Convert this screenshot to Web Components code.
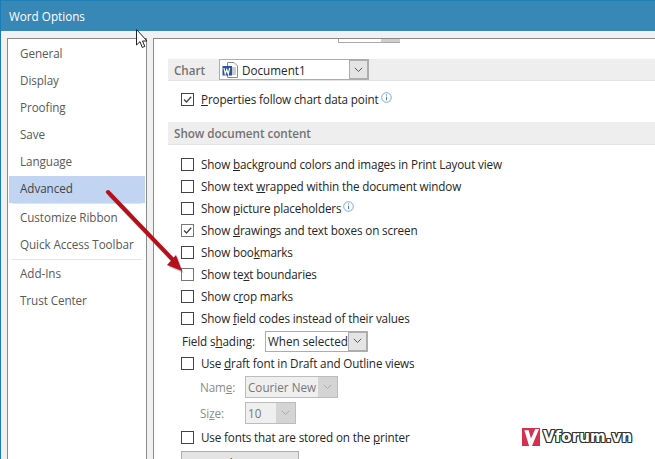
<!DOCTYPE html>
<html lang="en"><head><meta charset="utf-8"><title>Word Options</title>
<style>
html,body{margin:0;padding:0;height:459px;overflow:hidden;background:#f1f1f1}
body{font:11.7px "Open Sans","Noto Sans",sans-serif;color:#262626}
word-options{height:459px}
</style></head><body>
<word-options>
  <nav-panel slot="nav">
    <nav-item>General</nav-item><nav-item>Display</nav-item><nav-item>Proofing</nav-item><nav-item>Save</nav-item><nav-item>Language</nav-item>
    <nav-item selected>Advanced</nav-item>
    <nav-sep></nav-sep>
    <nav-item>Customize Ribbon</nav-item><nav-item>Quick Access Toolbar</nav-item>
    <nav-sep></nav-sep>
    <nav-item>Add-Ins</nav-item><nav-item>Trust Center</nav-item>
  </nav-panel>
  <options-pane slot="content">
    <section-head style="height:22px;margin-top:20px">
      <span style="width:45px">Chart</span>
      <opt-combo w="150" h="21" doc>Document1</opt-combo>
    </section-head>
    <opt-check checked style="margin-top:7px"><u>P</u>roperties follow chart data point<info-icon></info-icon></opt-check>
    <section-head style="height:23px;margin-top:12px;margin-bottom:8px"><span>Show document content</span></section-head>
    <opt-check>Show <u>b</u>ackground colors and images in Print Layout view</opt-check>
    <opt-check>Show text <u>w</u>rapped within the document window</opt-check>
    <opt-check>Show <u>p</u>icture placeholders<info-icon></info-icon></opt-check>
    <opt-check checked soft>Show <u>d</u>rawings and text boxes on screen</opt-check>
    <opt-check>Show boo<u>k</u>marks</opt-check>
    <opt-check soft>Show te<u>x</u>t boundaries</opt-check>
    <opt-check>Show c<u>r</u>op marks</opt-check>
    <opt-check>Show <u>f</u>ield codes instead of their values</opt-check>
    <opt-field label="Field s|h|ading:" w="83" pad="14" style="height:24px"><opt-combo w="103" h="21">When selected</opt-combo></opt-field>
    <opt-check style="height:20px">Use <u>d</u>raft font in Draft and Outline views</opt-check>
    <opt-field label="Nam|e|:" disabled w="45" pad="32" style="height:26px;margin-top:1px"><opt-combo w="93" h="22" disabled>Courier New</opt-combo></opt-field>
    <opt-field label="Si|z|e:" disabled w="45" pad="32" style="height:25px"><opt-combo w="51" h="22" disabled>10</opt-combo></opt-field>
    <opt-check style="margin-top:1px">Use fonts that are stored on the <u>p</u>rinter</opt-check>
    <opt-button style="margin-top:3px">Font Substitution...</opt-button>
  </options-pane>
  <hover-cursor slot="overlay"></hover-cursor>
  <red-arrow slot="overlay"></red-arrow>
  <vforum-mark slot="overlay"></vforum-mark>
</word-options>
<script>
const def=(name,html)=>customElements.define(name,class extends HTMLElement{
  connectedCallback(){ if(this.shadowRoot) return; const r=this.attachShadow({mode:'open'}); r.innerHTML=typeof html==='function'?html(this):html; }
});
const F='"Open Sans","Noto Sans",sans-serif';
def('word-options',`<style>
:host{display:flex;flex-direction:column;position:relative;overflow:hidden;background:#f1f1f1;border-left:1px solid #1b7db5}
.title{height:31px;flex:none;box-sizing:border-box;border-top:1px solid #1e80b6;background:#3787b7;color:#fff;font:11.7px ${F};display:flex;align-items:center;padding-left:8px}
.main{flex:1;display:flex;gap:6px;padding:7px 0 0 6px;min-height:0}
</style><div class="title">Word Options</div><div class="main"><slot name="nav"></slot><slot name="content"></slot></div><slot name="overlay"></slot>`);
def('nav-panel',`<style>
:host{display:flex;flex-direction:column;box-sizing:border-box;width:140px;flex:none;background:#fff;border:1px solid #8a8a8a;border-bottom:0;padding:2px 1px 0 1px}
</style><slot></slot>`);
def('nav-item',`<style>
:host{display:block;height:27px;padding-left:11px;font:11.7px/25px ${F};color:#595959;letter-spacing:-.08px}
:host([selected]){background:#c1d4f1;color:#444}
</style><slot></slot>`);
def('nav-sep',`<style>:host{display:block;height:2px;margin:0 3px;border-top:1px solid #e4e4e4;box-sizing:border-box}</style>`);
def('options-pane',`<style>
:host{display:flex;flex-direction:column;flex:1;min-width:0;box-sizing:border-box;background:#fff;border-top:1px solid #8a8a8a;border-left:1px solid #8a8a8a;padding-left:14px;position:relative;overflow:hidden}
.scrap{position:absolute;left:184px;top:0;width:62px;height:4px;box-sizing:border-box;border:1px solid #a9a9a9;border-top:0}
.scrap i{position:absolute;right:-1px;top:0;width:19px;height:3px;background:#cfcfcf}
</style><div class="scrap"><i></i></div><slot></slot>`);
def('section-head',`<style>
:host{display:flex;align-items:center;flex:none;background:#eeeeee;border-bottom:1px solid #e2e2e2;box-sizing:border-box;padding-left:6px;color:#737373;font:600 11.7px ${F};letter-spacing:-.05px}
::slotted(span){display:block;flex:none}
</style><slot></slot>`);
def('opt-check',h=>`<style>
:host{display:flex;align-items:center;height:22px;flex:none;padding-left:13px;font:11.7px ${F};color:#262626;letter-spacing:-.15px}
.box{width:13px;height:13px;flex:none;box-sizing:border-box;border:1px solid #444;background:#fff;margin-right:7px;display:block}
:host([soft]) .box{border-color:#777}
svg{display:block}
</style><span class="box">${h.hasAttribute('checked')?'<svg width="11" height="11" viewBox="0 0 11 11"><path d="M2 5.500l2.500 2.500L9.200 2.800" fill="none" stroke="#444" stroke-width="1.300"/></svg>':''}</span><span><slot></slot></span>`);
def('info-icon',`<style>:host{display:inline-block;width:11px;height:11px;margin-left:2px;vertical-align:1px}svg{display:block}</style><svg width="11" height="11" viewBox="0 0 11 11"><circle cx="5.500" cy="5.500" r="4.800" fill="none" stroke="#7aa7e0"/><path d="M5.500 2.500v1M5.500 4.700v3.500" stroke="#3f7fd0" fill="none"/></svg>`);
def('opt-field',h=>{const [a,b,c]=h.getAttribute('label').split('|');return `<style>
:host{display:flex;align-items:center;flex:none;font:11.7px ${F};color:#262626;letter-spacing:-.12px;padding-left:${h.getAttribute('pad')}px}
:host([disabled]){color:#8c8c8c}
.l{width:${h.getAttribute('w')}px;flex:none}
</style><span class="l">${a}<u>${b}</u>${c}</span><slot></slot>`});
def('opt-combo',h=>{const dis=h.hasAttribute('disabled');return `<style>
:host{display:flex;flex:none;box-sizing:border-box;width:${h.getAttribute('w')}px;height:${h.getAttribute('h')}px;border:1px solid ${dis?'#bcbcbc':'#adadad'};background:${dis?'#efefef':'#fff'};color:${dis?'#777':'#262626'};font:11.7px ${F};font-weight:400;letter-spacing:0}
.t{flex:1;min-width:0;display:flex;align-items:center;padding-left:2px;white-space:nowrap;overflow:hidden;gap:4px;color:inherit}
.b{width:19px;box-sizing:border-box;flex:none;display:flex;align-items:center;justify-content:center;background:${dis?'#d4d4d4':'#e4e4e4'};border:${dis?'0':'1px solid #adadad'}}
svg{display:block}
</style><span class="t">${h.hasAttribute('doc')?`<svg width="16" height="16" viewBox="0 0 16 16"><path d="M5.500 .5H12L15.500 4V15.500H5.500Z" fill="#fff" stroke="#8c8c8c"/><path d="M10 6h4M10 8h4M10 10h4M10 12h4" stroke="#9a9a9a"/><rect x=".5" y="4" width="9.500" height="9.500" fill="#2a5699"/><path d="M2 6l1.200 6 1.500-4.500L6.300 12l1.300-6" fill="none" stroke="#fff" stroke-width="1.200"/></svg>`:''}<slot></slot></span><span class="b"><svg width="9" height="6" viewBox="0 0 9 6"><path d="M.8 .8L4.500 4.500 8.200 .8" fill="none" stroke="${dis?'#aaa':'#555'}"/></svg></span>`});
def('opt-button',`<style>:host{display:block;flex:none;box-sizing:border-box;width:118px;height:28px;margin-left:13px;background:#e4e4e4;border:1px solid #adadad;text-align:center;font:11.7px/22px ${F};color:#262626}</style><slot></slot>`);
def('hover-cursor',`<style>:host{position:absolute;left:132px;top:28px;width:15px;height:21px}svg{display:block}</style><svg width="15" height="21" viewBox="0 0 15 21"><path d="M3.500 1.500V17L7 13.700 9.300 19.500 11.800 18.400 9.500 13H14Z" fill="#fff" stroke="#222"/></svg>`);
def('red-arrow',`<style>:host{position:absolute;left:100px;top:185px;width:90px;height:95px;pointer-events:none}svg{display:block;overflow:visible}</style><svg width="90" height="95" viewBox="0 0 90 95"><g transform="translate(1.500 2)" opacity=".3"><path d="M7 7L74 77" stroke="#555" stroke-width="4.500" fill="none"/><path d="M81 86L66 80 75 70Z" fill="#555"/></g><path d="M7 7L74 77" stroke="#b5101a" stroke-width="4" stroke-linecap="round" fill="none"/><path d="M81 86L66 80 75 70Z" fill="#b5101a"/></svg>`);
def('vforum-mark',`<style>
:host{position:absolute;left:521px;top:428px;display:flex;align-items:center;gap:3px;height:18px}
.logo{width:18px;height:18px;display:block}
.t{font:700 15px "DejaVu Sans",sans-serif;color:#fff;letter-spacing:.1px;text-shadow:-1px 0 #333,1px 0 #333,0 -1px #333,0 1px #333,1px 1px #333,-1px -1px #333,1px -1px #333,-1px 1px #333;line-height:18px}
</style><svg class="logo" viewBox="0 0 19 19"><rect width="19" height="19" fill="#d5304f"/><path d="M2.500 2.500H7L9.500 11 14 1H18L10.500 19H7.500Z" fill="#fff"/></svg><span class="t">Vforum.vn</span>`);
</script>
</body></html>
